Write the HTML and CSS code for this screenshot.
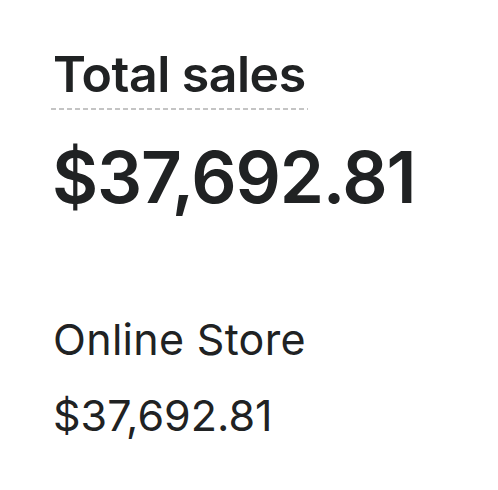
FILE: index.html
```html
<!DOCTYPE html>
<html lang="en">
<head>
<meta charset="utf-8">
<title>Total sales</title>
<link rel="stylesheet" href="styles.css">
</head>
<body>
<main class="card">
  <h2 class="title"><span class="title-text">Total sales</span></h2>
  <p class="total">$37,692.81</p>
  <section class="channel">
    <h3 class="channel-name">Online Store</h3>
    <p class="channel-value">$37,692.81</p>
  </section>
</main>
</body>
</html>
```

FILE: styles.css
```css
html, body {
  margin: 0;
  padding: 0;
  background: #ffffff;
}
body {
  font-family: Inter, "Noto Sans", "Liberation Sans", sans-serif;
  color: #202223;
}
.card {
  padding: 44px 0 0 51px;
}
.title {
  margin: 0;
  font-size: 50px;
  font-weight: 600;
  line-height: 60px;
  letter-spacing: -0.5px;
}
.title-text {
  display: inline-block;
  padding: 0 2px 6px;
  background-image: repeating-linear-gradient(to right, #c4c4c4 0 5px, transparent 5px 8px);
  background-size: 100% 2px;
  background-repeat: no-repeat;
  background-position: left bottom;
}
.total {
  margin: 27px 0 0 1px;
  font-size: 71px;
  font-weight: 600;
  line-height: 80px;
  letter-spacing: -1.2px;
}
.channel {
  margin-top: 96px;
}
.channel-name {
  margin: 0 0 0 2px;
  font-size: 43px;
  font-weight: 400;
  line-height: 52px;
  letter-spacing: 0.3px;
}
.channel-value {
  margin: 24px 0 0 2px;
  font-size: 43px;
  font-weight: 400;
  line-height: 52px;
}
```
